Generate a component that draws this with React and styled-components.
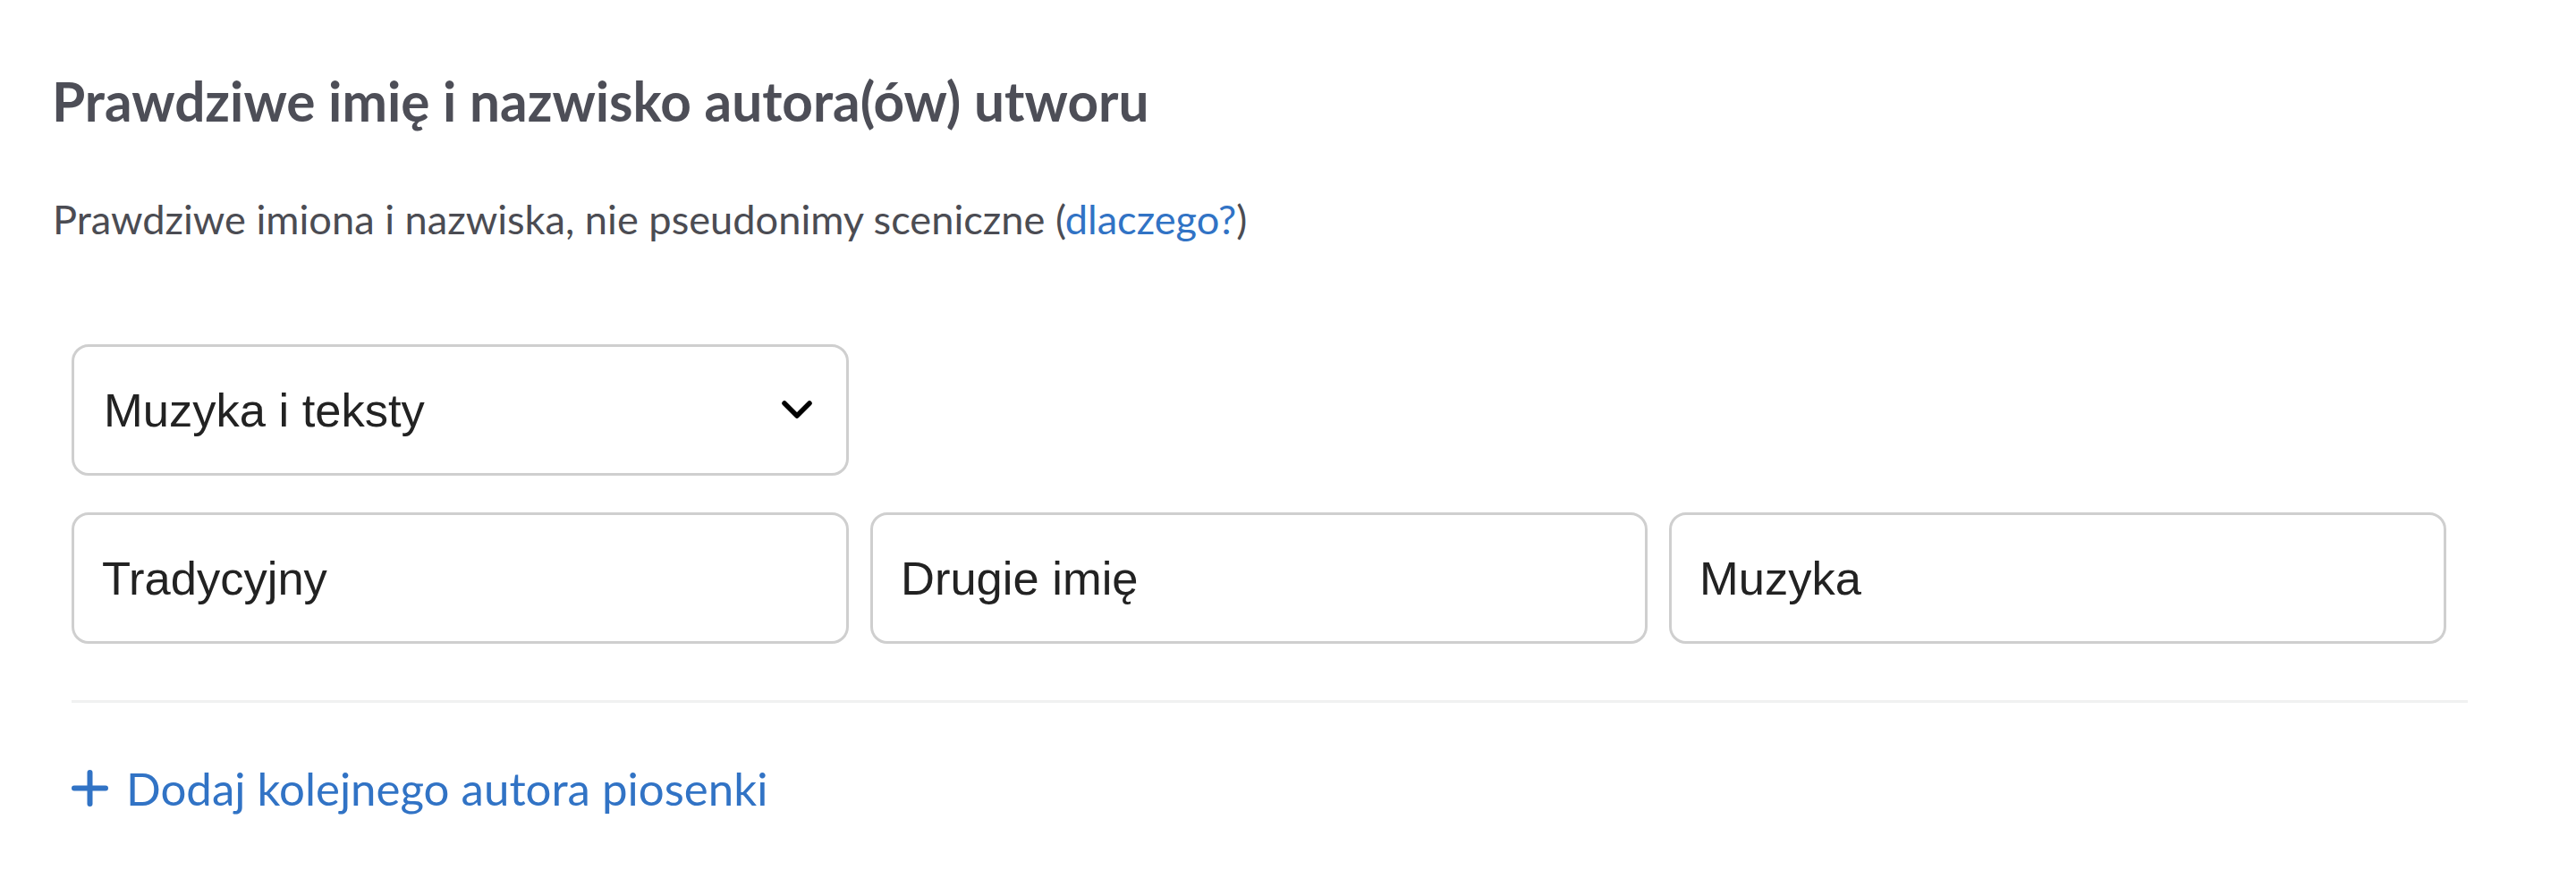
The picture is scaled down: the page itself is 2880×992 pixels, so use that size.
import React from 'react';
import styled, { createGlobalStyle } from 'styled-components';

const GlobalStyle = createGlobalStyle`
  body {
    margin: 0;
    background: #ffffff;
    font-family: Lato, "Noto Sans", sans-serif;
  }
`;

const Section = styled.section`
  padding: 77px 0 0 58px;
`;

const Title = styled.h2`
  margin: 0;
  font-family: Lato, sans-serif;
  font-weight: 700;
  font-size: 60.3px;
  line-height: 72px;
  color: #4d4e57;
`;

const Hint = styled.p`
  margin: 68.5px 0 0 1px;
  font-family: Lato, sans-serif;
  font-size: 45.2px;
  line-height: 54px;
  color: #4b4c53;
`;

const Link = styled.a`
  color: #3173c5;
  text-decoration: none;
  cursor: pointer;
`;

const Authors = styled.div`
  margin: 113.5px 0 0 22px;
  width: 2679px;
`;

const Row = styled.div`
  display: flex;
  gap: 24px;
  margin-top: ${(p) => p.$top || 0}px;
`;

const Field = styled.input`
  box-sizing: border-box;
  width: 869px;
  height: 147px;
  padding: 0 31px;
  border: 3px solid #cfcfcf;
  border-radius: 19px;
  background: #fff;
  font-family: "Liberation Sans", Arial, sans-serif;
  font-size: 52.5px;
  color: #222;
  outline: none;
`;

const Select = styled.div`
  box-sizing: border-box;
  width: 869px;
  height: 147px;
  padding: 0 38px 0 33px;
  border: 3px solid #cfcfcf;
  border-radius: 19px;
  display: flex;
  align-items: center;
  justify-content: space-between;
  font-family: "Liberation Sans", Arial, sans-serif;
  font-size: 52.5px;
  color: #222;
  cursor: pointer;
`;

const Divider = styled.hr`
  margin: 63px 0 0;
  border: 0;
  height: 3px;
  background: #f0f1f1;
`;

const AddAuthor = styled.a`
  margin-top: 65px;
  display: inline-flex;
  align-items: center;
  gap: 20px;
  font-family: Lato, sans-serif;
  font-size: 51px;
  line-height: 61px;
  color: #3173c5;
  cursor: pointer;
`;

const Chevron = () => (
  <svg width="34" height="22" viewBox="0 0 34 22" fill="none">
    <polyline points="3,3 17,17 31,3" stroke="#000" strokeWidth="5.5" strokeLinecap="round" strokeLinejoin="round" />
  </svg>
);

const Plus = () => (
  <svg width="41" height="41" viewBox="0 0 41 41" fill="none">
    <path d="M20.5 3v35M3 20.5h35" stroke="#3173c5" strokeWidth="6" strokeLinecap="round" />
  </svg>
);

export default function App() {
  return (
    <>
      <GlobalStyle />
      <Section>
        <Title>Prawdziwe imię i nazwisko autora(ów) utworu</Title>
        <Hint>
          Prawdziwe imiona i nazwiska, nie pseudonimy sceniczne (<Link>dlaczego?</Link>)
        </Hint>
        <Authors>
          <Row>
            <Select>
              <span>Muzyka i teksty</span>
              <Chevron />
            </Select>
          </Row>
          <Row $top={41}>
            <Field defaultValue="Tradycyjny" readOnly />
            <Field defaultValue="Drugie imię" readOnly />
            <Field defaultValue="Muzyka" readOnly />
          </Row>
          <Divider />
          <AddAuthor>
            <Plus />
            Dodaj kolejnego autora piosenki
          </AddAuthor>
        </Authors>
      </Section>
    </>
  );
}
